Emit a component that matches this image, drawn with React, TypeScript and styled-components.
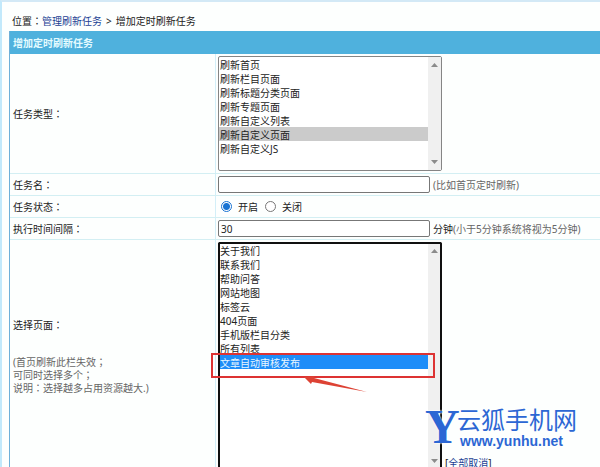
import React from "react";
import styled, { createGlobalStyle, css } from "styled-components";

const GlobalStyle = createGlobalStyle`
  * { box-sizing: border-box; }
  html, body { margin: 0; }
  body {
    overflow: hidden;
    background: #fdfffe;
    color: #222;
    font: 10px/14px "Noto Sans", "Noto Sans CJK SC", sans-serif;
  }
`;

const controlText = css`
  color: #222;
  font: inherit;
`;

const Page = styled.div`
  position: relative;
  min-height: 100vh;
  padding: 12px 0 0 8px;
  border-top: 2px solid #d3e9f6;
  border-left: 2px solid #c2e9fb;
`;

const Breadcrumb = styled.nav`
  padding: 0 2px;
  margin-bottom: 3px;
`;

const Link = styled.a`
  color: #1c3f94;
  text-decoration: none;
`;

const Separator = styled.span`
  margin: 0 4px;
`;

/* Full-width punctuation set in the middle of its cell. */
const MarkText = styled.span`
  font-family: "Noto Sans CJK TC", sans-serif;
  line-height: 1;
`;

const Panel = styled.form`
  margin-left: -1px;
  border-left: 1px solid #6fb0d8;
`;

const PanelTitle = styled.h1`
  margin: 0;
  padding: 5px 3px 4px;
  background: #4fb1dd;
  color: #e4fbff;
  font-size: 10px;
  line-height: 14px;
`;

const Row = styled.div`
  display: grid;
  grid-template-columns: 206px 1fr;
  border-bottom: 1px solid #d3eff3;
`;

const LabelCell = styled.div`
  display: flex;
  flex-direction: column;
  justify-content: center;
  padding: 0 3px;
  border-right: 1px solid #d3eff8;
`;

const Field = styled.div<{ $end?: boolean }>`
  display: flex;
  align-items: ${(p) => (p.$end ? "flex-end" : "center")};
  gap: 3px;
  min-height: 21px;
  padding: 2px;
`;

const Note = styled.span`
  color: #666;
`;

const LabelNote = styled.p`
  margin: 24px 0 0;
  color: #666;
  line-height: 13px;
`;

const ListFrame = styled.div<{ $active?: boolean }>`
  position: relative;
  display: flex;
  width: 224px;
  height: ${(p) => (p.$active ? "228px" : "115px")};
  border: 1px solid ${(p) => (p.$active ? "#101010" : "#858585")};
  outline: ${(p) => (p.$active ? "2px solid #101010" : "0")};
  outline-offset: -2px;
  border-radius: 2px;
  background: #fff;
`;

const ListBox = styled.select<{ $active?: boolean }>`
  ${controlText}
  flex: 1;
  min-width: 0;
  padding: 0;
  border: 0;
  outline: 0;
  background: transparent;
  overflow: hidden;

  option {
    height: 14px;
    min-height: 14px;
    padding: 0 1px;
    line-height: 14px;
  }

  option:checked {
    background-image: ${(p) =>
      p.$active
        ? "linear-gradient(#1e8df8, #1e8df8)"
        : "linear-gradient(#cbcbcb, #cbcbcb)"};
    -webkit-text-fill-color: ${(p) => (p.$active ? "#e8f6ff" : "#222")};
  }
`;

const Track = styled.div`
  display: flex;
  flex-direction: column;
  justify-content: space-between;
  align-items: center;
  width: 13px;
  padding: 5px 0;
  background: #f0f0f0;
`;

const TextInput = styled.input`
  ${controlText}
  width: 212px;
  height: 17px;
  padding: 0 2px;
  border: 1px solid #777;
  border-radius: 2px;
  background: #fff;
`;

const Choice = styled.label`
  display: flex;
  align-items: center;
  gap: 6px;
  margin: 0 1px 0 3px;
`;

const Radio = styled.input`
  appearance: none;
  width: 11px;
  height: 11px;
  margin: 0;
  border: 1px solid #777;
  border-radius: 50%;
  background: #fff;

  &:checked {
    border-color: #1873d3;
    background: radial-gradient(circle, #1873d3 3px, #fff 4px);
  }
`;

const RedBox = styled.div`
  position: absolute;
  top: 110px;
  left: -8px;
  width: 224px;
  height: 25px;
  border: 2px solid #dd3333;
  pointer-events: none;
`;

const Pointer = styled.svg`
  position: absolute;
  top: 131px;
  left: 83px;
  pointer-events: none;
`;

const Watermark = styled.div`
  position: absolute;
  top: 401px;
  left: 423px;
  display: flex;
  align-items: center;
  color: #2c67d4;
  white-space: nowrap;
`;

const Initial = styled.span`
  width: 32px;
  font: bold 48px/48px "Liberation Serif", serif;
  text-shadow: 0 0 2px #fff, 0 0 2px #fff;
`;

const SiteName = styled.div`
  font: 24px/28px "Noto Sans CJK SC", sans-serif;
`;

const SiteUrl = styled.div`
  padding-left: 3px;
  font: bold 14px/16px "Liberation Sans", sans-serif;
`;

function Mark({ children }: { children: string }) {
  return <MarkText lang="zh-TW">{children}</MarkText>;
}

function Scroller() {
  return (
    <Track aria-hidden="true">
      <svg width="7" height="5" viewBox="0 0 7 5">
        <path d="M0 5L3.5 1L7 5Z" fill="#8b8b8b" />
      </svg>
      <svg width="7" height="5" viewBox="0 0 7 5">
        <path d="M0 0L3.5 4L7 0Z" fill="#8b8b8b" />
      </svg>
    </Track>
  );
}

const taskTypes = [
  "刷新首页",
  "刷新栏目页面",
  "刷新标题分类页面",
  "刷新专题页面",
  "刷新自定义列表",
  "刷新自定义页面",
  "刷新自定义JS",
];

const pages = [
  "关于我们",
  "联系我们",
  "帮助问答",
  "网站地图",
  "标签云",
  "404页面",
  "手机版栏目分类",
  "所有列表",
  "文章自动审核发布",
];

export default function App() {
  return (
    <>
      <GlobalStyle />
      <Page lang="zh-CN">
        <Breadcrumb>
          位置<Mark>：</Mark>
          <Link href="#tasks">管理刷新任务</Link>
          <Separator>&gt;</Separator>
          增加定时刷新任务
        </Breadcrumb>
        <Panel>
          <PanelTitle>增加定时刷新任务</PanelTitle>
          <Row>
            <LabelCell>
              <label htmlFor="type">任务类型<Mark>：</Mark></label>
            </LabelCell>
            <Field>
              <ListFrame>
                <ListBox id="type" size={8} defaultValue="刷新自定义页面">
                  {taskTypes.map((t) => (
                    <option key={t}>{t}</option>
                  ))}
                </ListBox>
                <Scroller />
              </ListFrame>
            </Field>
          </Row>
          <Row>
            <LabelCell>
              <label htmlFor="name">任务名<Mark>：</Mark></label>
            </LabelCell>
            <Field>
              <TextInput id="name" />
              <Note>(比如首页定时刷新)</Note>
            </Field>
          </Row>
          <Row>
            <LabelCell>
              <span id="state">任务状态<Mark>：</Mark></span>
            </LabelCell>
            <Field role="radiogroup" aria-labelledby="state">
              <Choice>
                <Radio type="radio" name="state" defaultChecked />
                开启
              </Choice>
              <Choice>
                <Radio type="radio" name="state" />
                关闭
              </Choice>
            </Field>
          </Row>
          <Row>
            <LabelCell>
              <label htmlFor="interval">执行时间间隔<Mark>：</Mark></label>
            </LabelCell>
            <Field>
              <TextInput id="interval" defaultValue="30" />
              <span>
                分钟<Note>(小于5分钟系统将视为5分钟)</Note>
              </span>
            </Field>
          </Row>
          <Row>
            <LabelCell>
              <label htmlFor="pages">选择页面<Mark>：</Mark></label>
              <LabelNote>
                (首页刷新此栏失效<Mark>；</Mark>
                <br />
                可同时选择多个<Mark>；</Mark>
                <br />
                说明<Mark>：</Mark>选择越多占用资源越大.)
              </LabelNote>
            </LabelCell>
            <Field $end>
              <ListFrame $active>
                <ListBox
                  id="pages"
                  $active
                  multiple
                  size={16}
                  defaultValue={["文章自动审核发布"]}
                >
                  {pages.map((p) => (
                    <option key={p}>{p}</option>
                  ))}
                </ListBox>
                <Scroller />
                <RedBox />
                <Pointer width="68" height="20" viewBox="0 0 68 20" aria-hidden="true">
                  <path d="M2 3L13 2L12 4L65 18L10 8L9 10Z" fill="#dd4234" />
                </Pointer>
              </ListFrame>
              <span>
                [<Link href="#clear">全部取消</Link>]
              </span>
            </Field>
          </Row>
        </Panel>
        <Watermark>
          <Initial>Y</Initial>
          <div>
            <SiteName>云狐手机网</SiteName>
            <SiteUrl>www.yunhu.net</SiteUrl>
          </div>
        </Watermark>
      </Page>
    </>
  );
}
